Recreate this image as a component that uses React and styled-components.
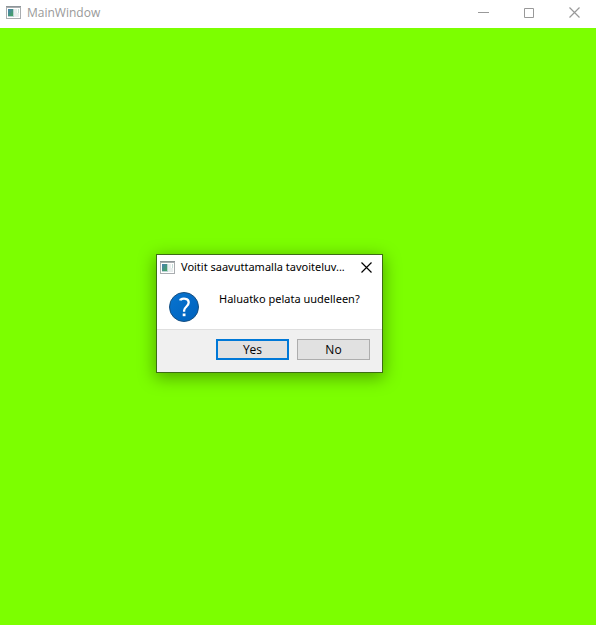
import React from "react";
import styled, { createGlobalStyle } from "styled-components";

const GlobalStyle = createGlobalStyle`
  *, *::before, *::after { box-sizing: border-box; }
  body {
    margin: 0;
    font-family: "Open Sans", "Noto Sans", sans-serif;
    font-size: 12px;
    line-height: 16px;
    color: #000;
  }
`;

const Window = styled.div`
  position: relative;
  display: flex;
  flex-direction: column;
  min-height: 100vh;
  background: #7cff00;
`;

const TitleBar = styled.header`
  display: flex;
  align-items: center;
  height: 28px;
  padding-left: 6px;
  padding-bottom: 3px;
  background: #fff;
`;

const Title = styled.h1`
  flex: 1;
  margin: 0 0 0 6px;
  font-size: 12px;
  font-weight: 400;
  line-height: 16px;
  color: #999;
  white-space: nowrap;
`;

const CaptionButton = styled.button`
  display: flex;
  align-items: center;
  justify-content: center;
  width: ${({ $width }) => $width}px;
  height: 24px;
  padding: 0;
  border: 0;
  background: transparent;
  color: ${({ $active }) => ($active ? "#000" : "#999")};
`;

const Dialog = styled.section`
  position: absolute;
  top: 254px;
  left: 156px;
  min-width: 227px;
  border: 1px solid #3d6e14;
  background: #fff;
  box-shadow: 0 4px 16px 1px rgba(0, 0, 0, 0.34);
`;

const DialogBar = styled.header`
  display: flex;
  align-items: center;
  height: 24px;
  padding-left: 3px;
`;

const DialogTitle = styled.h2`
  flex: 1;
  margin: 0 0 0 6px;
  font-family: "Noto Sans", "Open Sans", sans-serif;
  font-size: 11px;
  font-weight: 400;
  line-height: 16px;
  white-space: nowrap;
`;

const Message = styled.div`
  display: flex;
  align-items: flex-start;
  gap: 19px;
  height: 50px;
  padding: 12px 16px 0 12px;
`;

const Question = styled.p`
  margin: 0;
  font-family: "Noto Sans", "Open Sans", sans-serif;
  font-size: 11px;
  white-space: nowrap;
`;

const Footer = styled.footer`
  display: flex;
  justify-content: flex-end;
  gap: 8px;
  padding: 9px 12px 12px;
  border-top: 1px solid #dfdfdf;
  background: #f0f0f0;
`;

const PushButton = styled.button`
  width: 73px;
  height: 21px;
  padding: 0;
  border: ${({ $primary }) => ($primary ? "2px solid #0078d7" : "1px solid #adadad")};
  background: #e1e1e1;
  color: #000;
  font: inherit;
  line-height: 16px;
`;

function AppIcon({ id }) {
  return (
    <svg width="15" height="13" viewBox="0 0 15 13" aria-hidden="true">
      <defs>
        <linearGradient id={id} x1="0" y1="0" x2="1" y2="1">
          <stop offset="0" stopColor="#4a7fb5" />
          <stop offset="1" stopColor="#43a45c" />
        </linearGradient>
      </defs>
      <path fill="#a9adb0" d="M0 0h15v13H0z" />
      <path fill="#8e9599" d="M0 0h15v1H0z" />
      <path fill="#fff" d="M1 2h13v10H1z" />
      <path fill="#b9d3d4" d="M2 3h6v8H2z" />
      <path fill={`url(#${id})`} d="M2 3h5v7H2z" />
      <path fill="#e9eeee" d="M8 3h3v8H8z" />
      <path fill="#c4dcd8" d="M12 3h1v4h-1z" />
      <path fill="#e8eded" d="M11 7h2v4h-2z" />
    </svg>
  );
}

function CloseIcon() {
  return (
    <svg width="11" height="11" viewBox="0 0 11 11" aria-hidden="true">
      <path d="M.5.5l10 10M10.5.5l-10 10" fill="none" stroke="currentColor" strokeWidth="1.2" />
    </svg>
  );
}

function QuestionIcon() {
  return (
    <svg width="31" height="31" viewBox="0 0 31 31" aria-hidden="true">
      <defs>
        <linearGradient id="disc" x1="0" y1="0" x2="1" y2="1">
          <stop offset="0" stopColor="#0874d0" />
          <stop offset="1" stopColor="#0062bd" />
        </linearGradient>
      </defs>
      <circle cx="15" cy="16" r="14.5" fill="url(#disc)" stroke="#174f80" />
      <path
        d="M11.5 9.6V8.7C13.8 7.1 19.7 6.9 19.7 11.5c0 4-4.6 4.4-4.6 8v1.2"
        fill="none"
        stroke="#fff"
        strokeWidth="2.3"
      />
      <path d="M13.7 22.5h2.8v2.7h-2.8z" fill="#fff" />
    </svg>
  );
}

export default function App() {
  return (
    <>
      <GlobalStyle />
      <Window>
        <TitleBar>
          <AppIcon id="main-icon" />
          <Title>MainWindow</Title>
          <CaptionButton $width={45} aria-label="Minimize">
            <svg width="11" height="11" viewBox="0 0 11 11" aria-hidden="true">
              <path d="M0 5.5h11" stroke="currentColor" />
            </svg>
          </CaptionButton>
          <CaptionButton $width={46} aria-label="Maximize">
            <svg width="10" height="10" viewBox="0 0 10 10" aria-hidden="true">
              <path d="M.5.5h9v9h-9z" fill="none" stroke="currentColor" />
            </svg>
          </CaptionButton>
          <CaptionButton $width={44} aria-label="Close">
            <CloseIcon />
          </CaptionButton>
        </TitleBar>
        <Dialog role="dialog" aria-labelledby="dialog-title" aria-describedby="dialog-text">
          <DialogBar>
            <AppIcon id="dialog-icon" />
            <DialogTitle id="dialog-title">Voitit saavuttamalla tavoiteluv...</DialogTitle>
            <CaptionButton $width={31} $active aria-label="Close dialog">
              <CloseIcon />
            </CaptionButton>
          </DialogBar>
          <Message>
            <QuestionIcon />
            <Question id="dialog-text">Haluatko pelata uudelleen?</Question>
          </Message>
          <Footer>
            <PushButton $primary>Yes</PushButton>
            <PushButton>No</PushButton>
          </Footer>
        </Dialog>
      </Window>
    </>
  );
}
